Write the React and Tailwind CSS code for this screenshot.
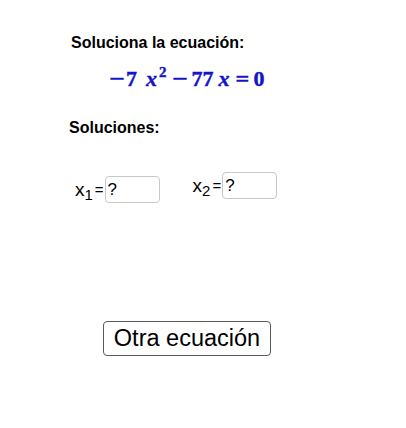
import React from "react";

const Answer = ({ index, className }) => (
  <div className={`flex items-center ${className}`}>
    <span className="text-[19px] leading-none text-black">
      x<sub className="text-[15px] relative top-[4px] align-baseline">{index}</sub>
    </span>
    <span className="ml-[2px] text-[15px] leading-none text-black">=</span>
    <div className="ml-[1px] w-[55px] h-[27px] rounded-[4px] border border-[#c8c8c8] bg-white flex items-center pl-[2px] text-[17px] text-black">
      ?
    </div>
  </div>
);

export default function App() {
  return (
    <div
      className="w-[406px] h-[428px] bg-white relative"
      style={{ fontFamily: '"Liberation Sans", Arial, sans-serif' }}
    >
      <div className="pt-[33px] pl-[71px]">
        <h2 className="text-[16px] font-bold text-black leading-[20px]">Soluciona la ecuación:</h2>
      </div>
      <div
        className="flex items-baseline pl-[109px] mt-[13px] text-[22px] font-bold text-[#1414c8] leading-[26px] whitespace-nowrap [-webkit-text-stroke:0.4px_#1414c8]"
        style={{ fontFamily: '"Liberation Serif", "DejaVu Serif", serif' }}
      >
        <span className="inline-block w-[16px] text-center scale-x-125">−</span>
        <span className="ml-[1px]">7</span>
        <span className="ml-[9px] italic">x</span>
        <span className="ml-[2px] text-[15px] relative -top-[9px]">2</span>
        <span className="ml-[5px] inline-block w-[16px] text-center scale-x-125">−</span>
        <span className="ml-[4px]">77</span>
        <span className="ml-[5px] italic">x</span>
        <span className="ml-[5px] inline-block w-[15px] text-center scale-x-110">=</span>
        <span className="ml-[4px]">0</span>
      </div>
      <div className="pl-[69px] mt-[24px]">
        <h3 className="text-[16px] font-bold text-black leading-[20px]">Soluciones:</h3>
      </div>
      <div className="flex items-start pl-[75px] mt-[34px]">
        <Answer index="1" className="mt-[4px]" />
        <Answer index="2" className="ml-[33px]" />
      </div>
      <div className="pl-[103px] mt-[118px]">
        <button className="w-[168px] h-[35px] rounded-[4px] border border-[#5a5a5a] bg-white text-[23.5px] text-black leading-none">
          Otra ecuación
        </button>
      </div>
    </div>
  );
}
